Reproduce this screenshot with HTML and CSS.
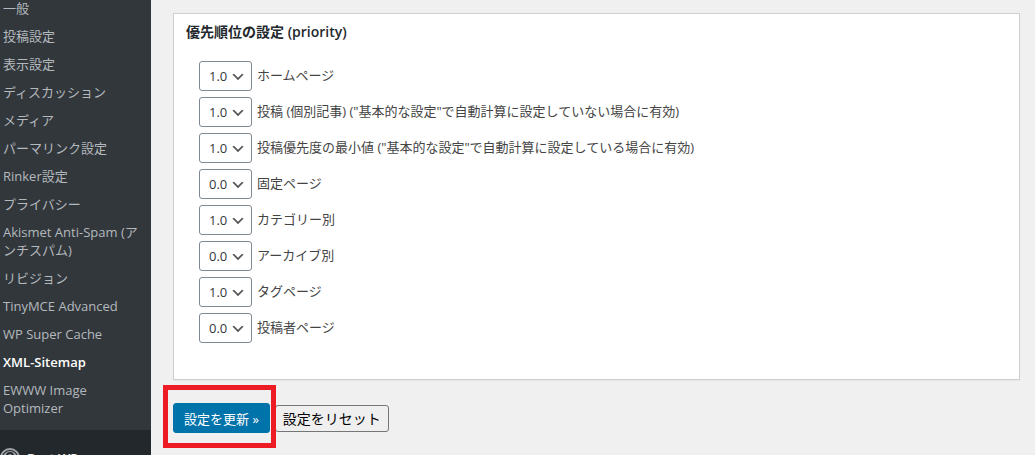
FILE: index.html
```html
<!DOCTYPE html>
<html lang="ja">
<head>
    <meta charset="UTF-8">
    <meta name="viewport" content="width=device-width, initial-scale=1.0">
    <title>XML-Sitemap</title>
    <link rel="stylesheet" href="styles.css">
</head>
<body>

    <!-- Admin menu -->
    <nav class="admin-menu">
        <ul class="submenu">
            <li><a href="#">一般</a></li>
            <li><a href="#">投稿設定</a></li>
            <li><a href="#">表示設定</a></li>
            <li><a href="#">ディスカッション</a></li>
            <li><a href="#">メディア</a></li>
            <li><a href="#">パーマリンク設定</a></li>
            <li><a href="#">Rinker設定</a></li>
            <li><a href="#">プライバシー</a></li>
            <li><a href="#">Akismet Anti-Spam (アンチスパム)</a></li>
            <li><a href="#">リビジョン</a></li>
            <li><a href="#">TinyMCE Advanced</a></li>
            <li><a href="#">WP Super Cache</a></li>
            <li><a href="#" class="current">XML-Sitemap</a></li>
            <li><a href="#">EWWW Image Optimizer</a></li>
        </ul>
        <a href="#" class="menu-top">
            <svg class="menu-icon" viewBox="0 0 20 20" aria-hidden="true">
                <circle cx="10" cy="10" r="9" fill="none" stroke="#a0a5aa" stroke-width="2"/>
                <circle cx="10" cy="10" r="7" fill="#a0a5aa"/>
                <path d="M7 8c0-4 6-4 6 0 0 2-3 2-3 4M10 14v2" fill="none" stroke="#23282d" stroke-width="2"/>
            </svg>
            Best WP
        </a>
    </nav>

    <!-- Settings -->
    <main class="content">
        <form>
            <section class="postbox">
                <h2>優先順位の設定 (priority)</h2>
                <ul class="priorities">
                    <li>
                        <select id="home"><option>0.0</option><option selected>1.0</option></select>
                        <label for="home">ホームページ</label>
                    </li>
                    <li>
                        <select id="posts"><option>0.0</option><option selected>1.0</option></select>
                        <label for="posts">投稿 (個別記事) ("基本的な設定"で自動計算に設定していない場合に有効)</label>
                    </li>
                    <li>
                        <select id="posts-min"><option>0.0</option><option selected>1.0</option></select>
                        <label for="posts-min">投稿優先度の最小値 ("基本的な設定"で自動計算に設定している場合に有効)</label>
                    </li>
                    <li>
                        <select id="pages"><option selected>0.0</option><option>1.0</option></select>
                        <label for="pages">固定ページ</label>
                    </li>
                    <li>
                        <select id="cats"><option>0.0</option><option selected>1.0</option></select>
                        <label for="cats">カテゴリー別</label>
                    </li>
                    <li>
                        <select id="archives"><option selected>0.0</option><option>1.0</option></select>
                        <label for="archives">アーカイブ別</label>
                    </li>
                    <li>
                        <select id="tags"><option>0.0</option><option selected>1.0</option></select>
                        <label for="tags">タグページ</label>
                    </li>
                    <li>
                        <select id="authors"><option selected>0.0</option><option>1.0</option></select>
                        <label for="authors">投稿者ページ</label>
                    </li>
                </ul>
            </section>
            <div class="submit">
                <div class="marked">
                    <button type="submit" class="button-primary">設定を更新 »</button>
                </div>
                <button type="reset" class="button-reset">設定をリセット</button>
            </div>
        </form>
    </main>

</body>
</html>
```

FILE: styles.css
```css
* {
    box-sizing: border-box;
}
body {
    margin: 0;
    height: 100vh;
    overflow: hidden;
    display: flex;
    background: #f0f0f0;
    color: #444;
    font-family: "Open Sans", "Noto Sans CJK JP", sans-serif;
    font-size: 13px;
    line-height: 18px;
}
ul {
    list-style: none;
    margin: 0;
    padding: 0;
}

/* Admin menu */
.admin-menu {
    flex: 0 0 151px;
    background: #23282d;
}
.submenu {
    margin-top: -6px;
    padding-bottom: 8px;
    background: #32373c;
}
.submenu a {
    display: block;
    padding: 5px 12px 5px 3px;
    color: #b4b9be;
    text-decoration: none;
}
.submenu .current {
    color: #fff;
    font-weight: 600;
}
.menu-top {
    display: flex;
    align-items: center;
    gap: 7px;
    padding-top: 18px;
    color: #eee;
    font-size: 13px;
    font-weight: 600;
    text-decoration: none;
}
.menu-icon {
    width: 20px;
    height: 20px;
}

/* Settings */
.content {
    flex: 1;
    padding: 13px 15px 0 22px;
}
.postbox {
    background: #fff;
    border: 1px solid #ccd0d4;
    box-shadow: 0 1px 1px rgba(0, 0, 0, 0.04);
    padding-bottom: 30px;
}
h2 {
    margin: 0;
    padding: 8px 12px;
    color: #23282d;
    font-size: 14px;
    font-weight: 600;
    line-height: 20px;
}
.priorities {
    padding: 11px 25px 0;
}
.priorities li {
    display: flex;
    align-items: center;
    gap: 5px;
    margin-bottom: 6px;
}
.priorities label {
    padding-bottom: 2px;
}
select {
    appearance: none;
    width: 53px;
    height: 30px;
    padding: 0 20px 0 9px;
    border: 1px solid #7e8993;
    border-radius: 3px;
    color: #32373c;
    font-family: inherit;
    font-size: 13px;
    background: #fff url('data:image/svg+xml,<svg xmlns="http://www.w3.org/2000/svg" viewBox="0 0 20 20"><path d="M5 6l5 5 5-5 2 1-7 7-7-7 2-1z" fill="%23555"/></svg>') no-repeat right 5px top 7px;
    background-size: 16px 16px;
}

/* Buttons */
.submit {
    display: flex;
    align-items: center;
    gap: 5px;
    margin-top: 23px;
}
.marked {
    position: relative;
}
.marked::after {
    content: "";
    position: absolute;
    inset: -18px -6px -15px -10px;
    border: 5px solid #ed1c24;
    pointer-events: none;
}
button {
    font-family: inherit;
}
.button-primary {
    display: block;
    height: 30px;
    padding: 0 10px;
    border: 1px solid #0073aa;
    border-radius: 3px;
    background: #0073aa;
    color: #fff;
    font-size: 13px;
}
.button-reset {
    height: 27px;
    padding: 0 7px;
    border: 1px solid #767676;
    border-radius: 3px;
    background: #efefef;
    color: #000;
    font-size: 14px;
}
```
